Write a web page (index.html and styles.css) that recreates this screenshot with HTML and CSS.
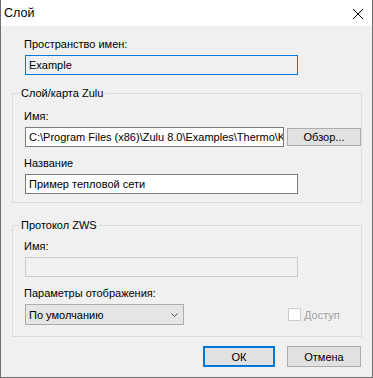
FILE: index.html
```html
<!DOCTYPE html>
<html lang="ru">
<head>
    <meta charset="UTF-8">
    <meta name="viewport" content="width=device-width, initial-scale=1.0">
    <title>Слой</title>
    <link rel="stylesheet" href="styles.css">
</head>
<body>
    <div class="dialog">
        <div class="titlebar">
            <span class="title">Слой</span>
            <svg class="close" width="10" height="10" viewBox="0 0 10 10">
                <path d="M0 0L10 10M10 0L0 10" stroke="#000" stroke-width="1" fill="none"/>
            </svg>
        </div>

        <div class="content">
            <div class="top-block">
                <label class="label" for="ns">Пространство имен:</label>
                <input class="field field-focus" type="text" id="ns" value="Example" readonly>
            </div>

            <fieldset class="group group-layer">
                <legend>Слой/карта Zulu</legend>
                <label class="label first" for="path">Имя:</label>
                <div class="row">
                    <input class="field field-path" type="text" id="path" value="C:\Program Files (x86)\Zulu 8.0\Examples\Thermo\Kemerovo.zmp" readonly>
                    <button class="btn btn-browse" type="button">Обзор...</button>
                </div>
                <label class="label" for="name">Название</label>
                <input class="field" type="text" id="name" value="Пример тепловой сети" readonly>
            </fieldset>

            <fieldset class="group group-zws">
                <legend>Протокол ZWS</legend>
                <label class="label first" for="zname">Имя:</label>
                <input class="field field-disabled" type="text" id="zname" disabled>
                <label class="label" for="view">Параметры отображения:</label>
                <div class="row row-view">
                    <div class="combo" id="view">
                        <span>По умолчанию</span>
                        <svg width="7" height="4" viewBox="0 0 7 4">
                            <polyline points="0.5,0.5 3.5,3.5 6.5,0.5" stroke="#4a4a4a" stroke-width="1" fill="none"/>
                        </svg>
                    </div>
                    <div class="check">
                        <span class="check-box"></span>
                        <span class="check-text">Доступ</span>
                    </div>
                </div>
            </fieldset>

            <div class="buttons">
                <button class="btn btn-default" type="button">ОК</button>
                <button class="btn btn-cancel" type="button">Отмена</button>
            </div>
        </div>
    </div>
</body>
</html>
```

FILE: styles.css
```css
body {
    margin: 0;
    font-family: "Liberation Sans", Arial, sans-serif;
    font-size: 11px;
    color: #000;
    background: #f0f0f0;
}

.dialog {
    width: 373px;
    height: 378px;
    box-sizing: border-box;
    border: 1px solid #6e6e6e;
    border-top: none;
    background: #f0f0f0;
    display: flex;
    flex-direction: column;
}

.titlebar {
    height: 26px;
    background: #ffffff;
    display: flex;
    align-items: center;
    justify-content: space-between;
    padding: 0 9px 0 3px;
}

.title {
    font-size: 12.5px;
}

.close {
    display: block;
    margin-top: 1px;
}

.content {
    flex: 1;
    padding: 11px 10px 0 11px;
}

.top-block {
    padding-left: 12px;
}

.label {
    display: block;
    line-height: 15px;
    margin: 9px 0 3px;
}

.top-block .label {
    margin-top: 0;
}

.field {
    display: block;
    box-sizing: border-box;
    width: 273px;
    height: 20px;
    margin: 0 0 0 1px;
    padding: 0 3px;
    border: 1px solid #7a7a7a;
    background: #ffffff;
    font-family: inherit;
    font-size: 11px;
    color: #000;
    outline: none;
}

.field-focus {
    border-color: #0078d7;
    background: #f0f0f0;
}

.field-path {
    width: 259px;
    padding-right: 0;
}

.field-disabled {
    border-color: #cccccc;
    background: #f0f0f0;
}

.group {
    margin: 0;
    min-width: 0;
    border: 1px solid #dcdcdc;
    padding: 0 0 8px 11px;
}

.group legend {
    margin-left: -5px;
    padding: 0 2px;
    line-height: 16px;
}

.group-layer {
    margin-top: 10px;
}

.group-layer .first {
    margin-top: 8px;
}

.group-zws {
    margin-top: 14px;
    padding-bottom: 11px;
}

.group-zws .first {
    margin-top: 6px;
}

.row {
    display: flex;
    align-items: center;
    gap: 3px;
    height: 20px;
}

.row-view {
    height: 21px;
    gap: 0;
}

.btn {
    box-sizing: border-box;
    height: 21px;
    padding: 0;
    border: 1px solid #adadad;
    background: #e1e1e1;
    font-family: inherit;
    font-size: 11px;
    color: #000;
}

.btn-browse {
    width: 74px;
    height: 18px;
}

.combo {
    box-sizing: border-box;
    width: 159px;
    height: 21px;
    margin-left: 1px;
    padding: 0 5px 0 3px;
    border: 1px solid #adadad;
    background: #e5e5e5;
    display: flex;
    align-items: center;
    justify-content: space-between;
}

.combo svg {
    display: block;
}

.check {
    display: flex;
    align-items: center;
    gap: 3px;
    margin-left: 104px;
}

.check-box {
    box-sizing: border-box;
    width: 13px;
    height: 13px;
    border: 1px solid #cccccc;
    background: #ffffff;
}

.check-text {
    color: #a0a0a0;
}

.buttons {
    display: flex;
    justify-content: flex-end;
    gap: 12px;
    margin-top: 9px;
    padding-right: 1px;
}

.btn-default {
    width: 72px;
    border: 2px solid #0078d7;
}

.btn-cancel {
    width: 74px;
}
```
